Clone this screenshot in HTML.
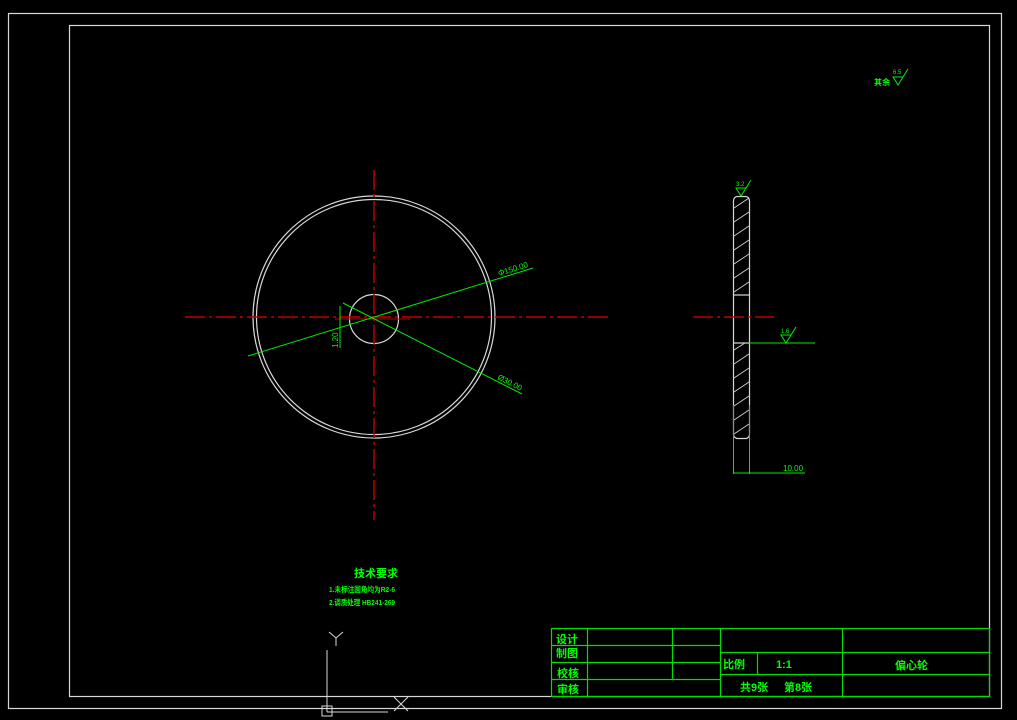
<!DOCTYPE html>
<html><head><meta charset="utf-8"><style>
html,body{margin:0;padding:0;background:#000;width:1017px;height:720px;overflow:hidden}
svg{display:block}
text{font-family:"Liberation Sans","Noto Sans CJK SC",sans-serif;fill:#00ff00}
</style></head><body>
<svg width="1017" height="720" viewBox="0 0 1017 720">
<g fill="none" stroke="#d8d8d8" stroke-width="1.2">
<rect x="8.5" y="13.5" width="993" height="695"/>
<rect x="69.5" y="25.5" width="920" height="671"/>
<circle cx="374" cy="317" r="121"/>
<circle cx="374" cy="317" r="117.5"/>
<circle cx="374" cy="319" r="24.5"/>
<rect x="733.5" y="196.5" width="16" height="242" rx="4"/>
<line x1="733.5" y1="295" x2="749.5" y2="295"/>
<line x1="733.5" y1="343" x2="749.5" y2="343"/>
</g>
<g stroke="#d8d8d8" stroke-width="0.8">
<line x1="734" y1="208" x2="749" y2="198"/>
<line x1="734" y1="222" x2="749" y2="212"/>
<line x1="734" y1="236" x2="749" y2="226"/>
<line x1="734" y1="250" x2="749" y2="240"/>
<line x1="734" y1="264" x2="749" y2="254"/>
<line x1="734" y1="278" x2="749" y2="268"/>
<line x1="734" y1="292" x2="749" y2="282"/>
<line x1="734" y1="350" x2="745" y2="343"/>
<line x1="734" y1="364" x2="749" y2="354"/>
<line x1="734" y1="378" x2="749" y2="368"/>
<line x1="734" y1="392" x2="749" y2="382"/>
<line x1="734" y1="406" x2="749" y2="396"/>
<line x1="734" y1="420" x2="749" y2="410"/>
<line x1="734" y1="434" x2="749" y2="424"/>
</g>
<g stroke="#c00000" stroke-width="1.5" stroke-dasharray="20,4,3,4">
<line x1="374" y1="170" x2="374" y2="520"/>
<line x1="185" y1="317" x2="608" y2="317"/>
<line x1="693" y1="317" x2="774" y2="317"/>
</g>
<line x1="335" y1="319" x2="410" y2="319" stroke="#c00000" stroke-width="1"/>
<g stroke="#00ee00" stroke-width="1" fill="none">
<line x1="248" y1="356" x2="533" y2="268"/>
<line x1="343" y1="303" x2="522" y2="394"/>
<line x1="340" y1="306" x2="340" y2="348"/>
<line x1="749" y1="343" x2="815" y2="343"/>
<line x1="733.5" y1="405" x2="733.5" y2="474"/>
<line x1="749.5" y1="405" x2="749.5" y2="474"/>
<line x1="733" y1="473" x2="805" y2="473"/>
<path d="M736 188 L746 188 L741 196 Z M741 196 L751 180"/>
<path d="M781 335 L791 335 L786 343 Z M786 343 L796 327"/>
<path d="M893 77 L903 77 L898 85 Z M898 85 L908 69"/>
</g>
<g stroke="#00dd00" stroke-width="1.2" fill="none">
<rect x="551.5" y="628.5" width="438" height="68"/>
<line x1="587.5" y1="628" x2="587.5" y2="696"/>
<line x1="672.5" y1="628" x2="672.5" y2="679"/>
<line x1="720.5" y1="628" x2="720.5" y2="696"/>
<line x1="842.5" y1="628" x2="842.5" y2="696"/>
<line x1="757.5" y1="652" x2="757.5" y2="674"/>
<line x1="551" y1="645.5" x2="720" y2="645.5"/>
<line x1="551" y1="662.5" x2="720" y2="662.5"/>
<line x1="551" y1="679.5" x2="720" y2="679.5"/>
<line x1="720" y1="652.5" x2="989" y2="652.5"/>
<line x1="720" y1="674.5" x2="989" y2="674.5"/>
</g>
<g stroke="#d8d8d8" stroke-width="1" fill="none">
<line x1="327" y1="650" x2="327" y2="712"/>
<rect x="322" y="706" width="10" height="10"/>
<line x1="327" y1="712" x2="388" y2="712"/>
<path d="M394 697 L408 711 M408 697 L394 711"/>
<path d="M329 632 L336 638 L343 632 M336 638 L336 646"/>
</g>
<text x="499" y="276" font-size="8" transform="rotate(-17 499 276)">Φ150.00</text>
<text x="497" y="379" font-size="8" transform="rotate(27 497 379)">Ø30.00</text>
<text x="338" y="348" font-size="8" transform="rotate(-90 338 348)">1.20</text>
<text x="736" y="186" font-size="6">3.2</text>
<text x="781" y="333" font-size="6">1.6</text>
<text x="893" y="74" font-size="6">6.5</text>
<text x="874" y="85" font-size="8" font-weight="bold">其余</text>
<text x="783" y="471" font-size="8">10.00</text>
<text x="354" y="577" font-size="11" font-weight="bold">技术要求</text>
<text x="329" y="592" font-size="7.5" font-weight="bold" textLength="66" lengthAdjust="spacingAndGlyphs">1.未标注圆角均为R2-6</text>
<text x="329" y="605" font-size="7.5" font-weight="bold" textLength="66" lengthAdjust="spacingAndGlyphs">2.调质处理 HB241-269</text>
<g font-size="11" font-weight="bold">
<text x="556" y="643">设计</text>
<text x="556" y="657">制图</text>
<text x="557" y="677">校核</text>
<text x="557" y="693">审核</text>
<text x="723" y="668">比例</text>
<text x="776" y="668">1:1</text>
<text x="740" y="691">共9张</text>
<text x="784" y="691">第8张</text>
<text x="895" y="669">偏心轮</text>
</g>
</svg>
</body></html>
